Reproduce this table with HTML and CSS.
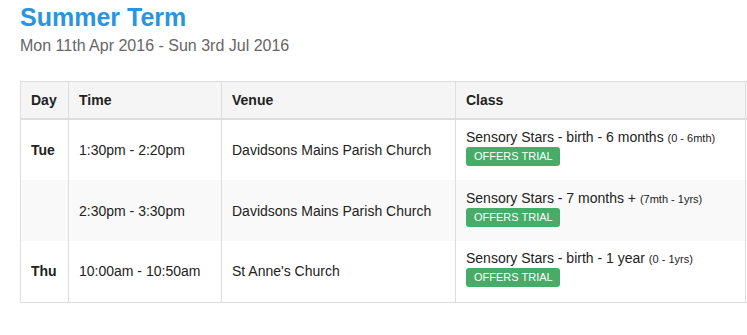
FILE: index.html
```html
<!DOCTYPE html>
<html>
<head>
<meta charset="utf-8">
<link rel="stylesheet" href="styles.css">
</head>
<body>
<div class="page">
  <h1 class="title">Summer Term</h1>
  <p class="dates">Mon 11th Apr 2016 - Sun 3rd Jul 2016</p>
  <div class="table-wrap">
    <table class="schedule">
      <colgroup>
        <col class="c-day"><col class="c-time"><col class="c-venue"><col class="c-class"><col class="c-extra">
      </colgroup>
      <thead>
        <tr><th>Day</th><th>Time</th><th>Venue</th><th>Class</th><th></th></tr>
      </thead>
      <tbody>
        <tr>
          <td class="day">Tue</td>
          <td>1:30pm - 2:20pm</td>
          <td>Davidsons Mains Parish Church</td>
          <td class="cls"><div class="cls-name">Sensory Stars - birth - 6 months <small>(0 - 6mth)</small></div><span class="badge">OFFERS TRIAL</span></td>
          <td></td>
        </tr>
        <tr class="alt">
          <td class="day"></td>
          <td>2:30pm - 3:30pm</td>
          <td>Davidsons Mains Parish Church</td>
          <td class="cls"><div class="cls-name">Sensory Stars - 7 months + <small>(7mth - 1yrs)</small></div><span class="badge">OFFERS TRIAL</span></td>
          <td></td>
        </tr>
        <tr class="last">
          <td class="day">Thu</td>
          <td>10:00am - 10:50am</td>
          <td>St Anne's Church</td>
          <td class="cls"><div class="cls-name">Sensory Stars - birth - 1 year <small>(0 - 1yrs)</small></div><span class="badge">OFFERS TRIAL</span></td>
          <td></td>
        </tr>
      </tbody>
    </table>
  </div>
</div>
</body>
</html>
```
FILE: styles.css
```css
html, body {
  margin: 0;
  padding: 0;
  overflow: hidden;
  background: #fff;
}
body {
  font-family: "Liberation Sans", Arial, sans-serif;
  color: #222;
}
.page {
  padding: 0 0 0 20px;
}
.title {
  margin: 0;
  padding-top: 3px;
  font-size: 25px;
  line-height: 28px;
  font-weight: bold;
  color: #2a95dd;
}
.dates {
  margin: 5px 0 0 0;
  font-size: 16px;
  line-height: 20px;
  color: #666;
}
.table-wrap {
  margin-top: 25px;
  width: 760px;
}
.schedule {
  border-collapse: collapse;
  table-layout: fixed;
  width: 760px;
  font-size: 14px;
  border-bottom: 1px solid #ddd;
}
.c-day { width: 48px; }
.c-time { width: 153px; }
.c-venue { width: 234px; }
.c-class { width: 290px; }
.c-extra { width: 35px; }
.schedule th,
.schedule td {
  border-left: 1px solid #ddd;
  border-right: 1px solid #ddd;
  text-align: left;
  vertical-align: middle;
  line-height: 20px;
}
.schedule th {
  background: #f5f5f5;
  font-weight: bold;
  border-top: 1px solid #ddd;
  border-bottom: 2px solid #ddd;
  padding: 8px 10px;
  height: 20px;
}
.schedule tbody tr {
  height: 61px;
}
.schedule td {
  padding: 0 10px;
}
.schedule tr.alt td {
  background: #f9f9f9;
}
.schedule td.day {
  font-weight: bold;
}
.cls-name {
  line-height: 17px;
}
.cls-name small {
  font-size: 11px;
}
.badge {
  display: inline-block;
  background: #46ac68;
  color: #fff;
  font-size: 11px;
  line-height: 19px;
  height: 19px;
  padding: 0 7px 0 8px;
  border-radius: 3px;
  margin-bottom: 5px;
  vertical-align: top;
}
```
